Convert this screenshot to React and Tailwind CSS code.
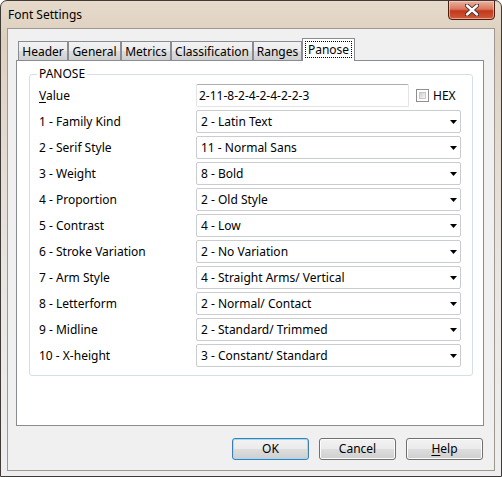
import React from 'react';

const rows = [
  ['1 - Family Kind', '2 - Latin Text'],
  ['2 - Serif Style', '11 - Normal Sans'],
  ['3 - Weight', '8 - Bold'],
  ['4 - Proportion', '2 - Old Style'],
  ['5 - Contrast', '4 - Low'],
  ['6 - Stroke Variation', '2 - No Variation'],
  ['7 - Arm Style', '4 - Straight Arms/ Vertical'],
  ['8 - Letterform', '2 - Normal/ Contact'],
  ['9 - Midline', '2 - Standard/ Trimmed'],
  ['10 - X-height', '3 - Constant/ Standard'],
];

const tabs = [
  { name: 'Header', w: 'w-[50px]' },
  { name: 'General', w: 'w-[53px]' },
  { name: 'Metrics', w: 'w-[50px]' },
  { name: 'Classification', w: 'w-[82px]' },
  { name: 'Ranges', w: 'w-[49px]' },
];

function Combo({ value }) {
  return (
    <div className="flex h-[23px] w-[265px] items-center justify-between rounded-[2px] border border-[#c9ccd1] bg-white pl-[4px] pr-[3px]">
      <span>{value}</span>
      <svg width="7" height="4" viewBox="0 0 7 4">
        <path d="M0 0H7L3.5 4Z" fill="#000" />
      </svg>
    </div>
  );
}

function Button({ children, primary }) {
  return (
    <button
      className={
        'flex h-[22px] w-[77px] items-center justify-center rounded-[3px] border bg-[linear-gradient(#f2f2f2_0%,#ebebeb_48%,#dddddd_52%,#cfcfcf_100%)] ' +
        (primary
          ? 'border-[#3c7fb1] shadow-[inset_0_0_0_1px_#9fdcf7]'
          : 'border-[#707070] shadow-[inset_0_0_0_1px_#fcfcfc]')
      }
    >
      {children}
    </button>
  );
}

export default function App() {
  return (
    <div className="relative flex h-[477px] w-[502px] flex-col overflow-hidden rounded-t-[7px] border border-[#3f3a36] bg-[linear-gradient(180deg,#e6dacb_0%,#ddd0bf_8%,#e4ddd4_35%,#ebe9e7_70%,#eeeef0_100%)] font-['Noto_Sans',sans-serif] text-[12px] leading-none text-black">
      {/* Title bar */}
      <div className="flex h-[27px] shrink-0 items-start justify-between">
        <span className="mt-[8px] pl-[7px] text-[12px]">Font Settings</span>
        <div className="mr-[6px] -mt-[1px] flex h-[20px] w-[47px] items-center justify-center rounded-b-[4px] border border-[#4a1d13] bg-[linear-gradient(180deg,#eab3a3_0%,#d9775c_45%,#c2381c_55%,#cf5a3a_100%)] shadow-[inset_0_0_0_1px_rgba(255,210,190,0.6)]">
          <svg width="14" height="12" viewBox="0 0 14 12">
            <path
              d="M2 1.5L12 10.5M12 1.5L2 10.5"
              stroke="#3b2a28"
              strokeWidth="4.2"
              strokeLinecap="round"
            />
            <path
              d="M2 1.5L12 10.5M12 1.5L2 10.5"
              stroke="#ffffff"
              strokeWidth="2.4"
              strokeLinecap="round"
            />
          </svg>
        </div>
      </div>

      {/* Client area */}
      <div className="mx-[6px] mb-[5px] flex flex-1 flex-col border border-[#9e9890] bg-[#f0f0f0] pl-[8px] pr-[10px] pt-[9px]">
        {/* Tab strip */}
        <div className="ml-[2px] flex h-[22px] items-end">
          {tabs.map((t) => (
            <div
              key={t.name}
              className={`${t.w} flex h-[19px] items-center justify-center border border-b-0 border-[#898c95] bg-[linear-gradient(180deg,#f2f2f2_0%,#ebebeb_50%,#dddddd_51%,#cfcfcf_100%)] pt-[1px]`}
            >
              {t.name}
            </div>
          ))}
          <div className="relative z-10 -mb-[1px] flex h-[23px] w-[53px] items-start justify-center border border-b-0 border-[#898c95] bg-white pt-[2px]">
            <span className="flex h-[17px] w-[47px] items-center justify-center border border-dotted border-black">
              Panose
            </span>
          </div>
        </div>

        {/* Tab panel */}
        <div className="h-[366px] w-[468px] border border-[#898c95] bg-white pl-[12px] pt-[13px]">
          <div className="relative h-[302px] w-[444px] rounded-[3px] border border-[#d5dfe5] pb-[8px] pl-[9px] pr-[11px] pt-[9px]">
            <span className="absolute -top-[7px] left-[7px] bg-white px-[2px]">PANOSE</span>
            <div className="flex flex-col gap-[3px]">
              <div className="flex h-[23px] items-center">
                <span className="w-[157px]">
                  <span className="underline underline-offset-2">V</span>alue
                </span>
                <div className="flex h-[23px] w-[213px] items-center rounded-[2px] border border-[#e2e3ea] border-t-[#abadb3] bg-white pl-[2px]">
                  2-11-8-2-4-2-4-2-2-3
                </div>
                <div className="ml-[7px] h-[13px] w-[13px] border border-[#8e8f8f] bg-white p-[2px]">
                  <div className="h-full w-full border border-[#c8c8c8] bg-[linear-gradient(135deg,#cbcfd5,#f6f6f6)]" />
                </div>
                <span className="ml-[4px]">HEX</span>
              </div>
              {rows.map(([label, value]) => (
                <div key={label} className="flex h-[23px] items-center">
                  <span className="w-[157px]">{label}</span>
                  <Combo value={value} />
                </div>
              ))}
            </div>
          </div>
        </div>

        {/* Buttons */}
        <div className="mt-[12px] flex justify-end gap-[10px] pr-[1px]">
          <Button primary>OK</Button>
          <Button>Cancel</Button>
          <Button>
            <span>
              <span className="underline underline-offset-2">H</span>elp
            </span>
          </Button>
        </div>
      </div>
    </div>
  );
}
